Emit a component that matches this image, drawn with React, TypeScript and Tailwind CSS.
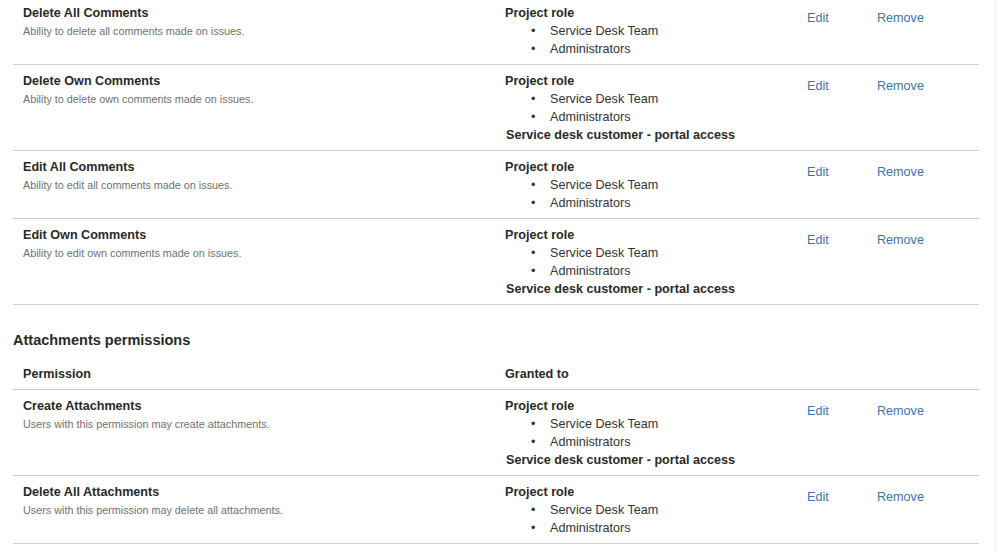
import React from "react";

type Row = { title: string; desc: string; customer: boolean };

const commentRows: Row[] = [
  { title: "Delete All Comments", desc: "Ability to delete all comments made on issues.", customer: false },
  { title: "Delete Own Comments", desc: "Ability to delete own comments made on issues.", customer: true },
  { title: "Edit All Comments", desc: "Ability to edit all comments made on issues.", customer: false },
  { title: "Edit Own Comments", desc: "Ability to edit own comments made on issues.", customer: true },
];

const attachRows: Row[] = [
  { title: "Create Attachments", desc: "Users with this permission may create attachments.", customer: true },
  { title: "Delete All Attachments", desc: "Users with this permission may delete all attachments.", customer: false },
];

function PermRow({ row }: { row: Row }) {
  return (
    <div className="grid grid-cols-[482px_302px_70px_1fr] border-b border-[#cfcfcf] pt-[7px] pb-[6px]">
      <div className="pl-[10px]">
        <div className="text-[12.6px] leading-[18px] font-bold text-[#292929]">{row.title}</div>
        <div className="text-[10.8px] leading-[18px] text-[#707070]">{row.desc}</div>
      </div>
      <div className="pl-[10px] text-[12.6px] leading-[18px] text-[#333]">
        <div className="font-bold text-[#292929]">Project role</div>
        <ul>
          <li className="flex pl-[26px]">
            <span className="w-[19px]">•</span>
            <span>Service Desk Team</span>
          </li>
          <li className="flex pl-[26px]">
            <span className="w-[19px]">•</span>
            <span>Administrators</span>
          </li>
        </ul>
        {row.customer && (
          <div className="font-bold text-[#292929] pl-[1px]">Service desk customer - portal access</div>
        )}
      </div>
      <div className="pl-[10px] pt-[5px] text-[12.6px] leading-[18px] text-[#3b73af]">Edit</div>
      <div className="pl-[10px] pt-[5px] text-[12.6px] leading-[18px] text-[#3b73af]">Remove</div>
    </div>
  );
}

export default function App() {
  return (
    <div
      className="w-[998px] h-[552px] overflow-hidden bg-white flex"
      style={{ fontFamily: '"Liberation Sans", Arial, sans-serif' }}
    >
      <div className="w-[996px] border-r border-[#efefef] pl-[13px] pr-[16px]">
        <div className="-mt-[3px]">
          {commentRows.map((r) => (
            <PermRow key={r.title} row={r} />
          ))}
        </div>
        <h2 className="mt-[25px] text-[14.5px] leading-[20px] font-bold text-[#292929]">
          Attachments permissions
        </h2>
        <div className="grid grid-cols-[482px_302px_70px_1fr] border-b border-[#cfcfcf] pt-[15px] pb-[6px] text-[12.6px] leading-[18px] font-bold text-[#292929]">
          <div className="pl-[10px]">Permission</div>
          <div className="pl-[10px]">Granted to</div>
          <div />
          <div />
        </div>
        {attachRows.map((r) => (
          <PermRow key={r.title} row={r} />
        ))}
      </div>
    </div>
  );
}
